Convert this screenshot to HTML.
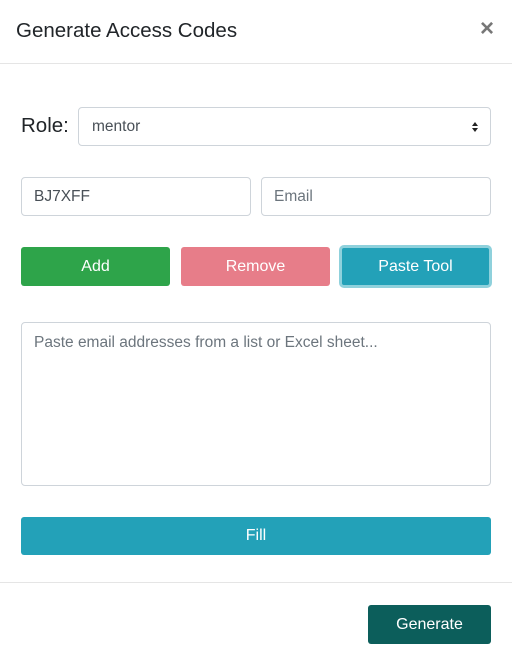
<!DOCTYPE html>
<html><head><style>
*{box-sizing:border-box;margin:0;padding:0}
body{width:512px;height:662px;background:#fff;font-family:"Liberation Sans",sans-serif;position:relative;overflow:hidden;color:#212529}
.a{position:absolute}
.title{left:16px;top:19px;font-size:20.5px;color:#212529}
.close{left:480px;top:15px;font-size:24px;color:#777;font-weight:bold}
.hr{left:0;width:512px;height:1px;background:#e5e5e5}
.inp{border:1px solid #ced4da;border-radius:4px;background:#fff;font-size:15.5px;color:#495057;padding-left:12px;display:flex;align-items:center}
.btn{border-radius:3px;color:#fff;font-size:16px;display:flex;align-items:center;justify-content:center}
</style></head><body>
<div class="a title">Generate Access Codes</div>
<div class="a close">×</div>
<div class="a hr" style="top:63px"></div>
<div class="a" style="left:21px;top:114px;font-size:20.5px">Role:</div>
<div class="a inp" style="left:78px;top:107px;width:413px;height:39px;padding-left:13px">mentor
<svg class="a" style="right:11px;top:13px" width="8" height="12" viewBox="0 0 8 12"><path d="M1 5L4 1L7 5Z M1 7L4 11L7 7Z" fill="#222"/></svg></div>
<div class="a inp" style="left:21px;top:177px;width:230px;height:39px">BJ7XFF</div>
<div class="a inp" style="left:261px;top:177px;width:230px;height:39px;color:#6c757d">Email</div>
<div class="a btn" style="left:21px;top:247px;width:149px;height:39px;background:#2ea44a">Add</div>
<div class="a btn" style="left:181px;top:247px;width:149px;height:39px;background:#e77d89">Remove</div>
<div class="a btn" style="left:339px;top:245px;width:153px;height:43px;background:#23a1b8;border:3px solid #8fd1dc;border-radius:5px">Paste Tool</div>
<div class="a inp" style="left:21px;top:322px;width:470px;height:164px;align-items:flex-start;padding-top:11px;color:#6c757d">Paste email addresses from a list or Excel sheet...</div>
<div class="a btn" style="left:21px;top:517px;width:470px;height:38px;background:#23a1b8">Fill</div>
<div class="a hr" style="top:582px"></div>
<div class="a btn" style="left:368px;top:605px;width:123px;height:39px;background:#0c5e5b">Generate</div>
</body></html>
